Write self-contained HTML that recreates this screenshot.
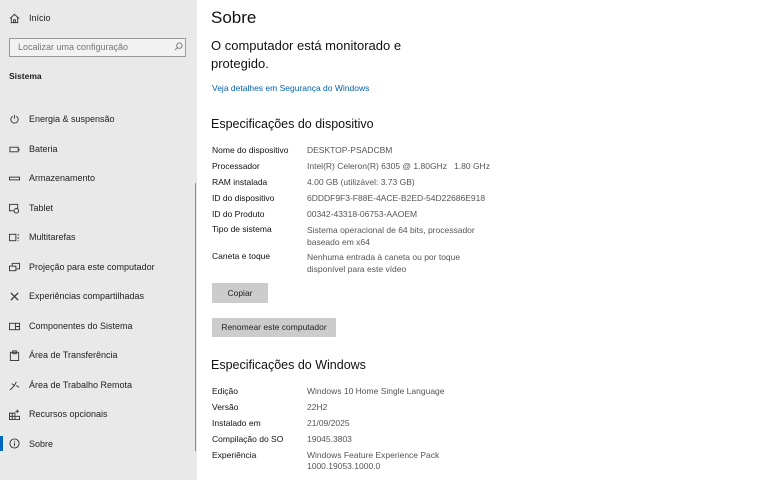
<!DOCTYPE html>
<html><head><meta charset="utf-8"><style>
*{margin:0;padding:0;box-sizing:border-box}
body{width:780px;height:480px;overflow:hidden;background:#fff;font-family:"Liberation Sans",sans-serif;position:relative;color:#000}
#side{position:absolute;left:0;top:0;width:197px;height:480px;background:#e9e9e9}
.t{position:absolute;white-space:nowrap}
.nav{font-size:9px;color:#222}
.ic{position:absolute;left:9px;width:11px;height:11px}
.lbl{font-size:8.5px;color:#111}
.val{font-size:8.5px;color:#555}
.btn{position:absolute;background:#ccc;font-size:8.5px;color:#222;text-align:center}
</style></head><body>
<div id="side">
<svg class="ic" style="top:13px" viewBox="0 0 12 12" fill="none" stroke="#333" stroke-width="1"><path d="M1 6L6 1.5 11 6M2.5 5v5.5h7V5M5 10.5V7.5h2v3"/></svg>
<div class="t nav" style="left:29px;top:13px">Início</div>
<div style="position:absolute;left:9px;top:38px;width:177px;height:19px;border:1px solid #9a9a9a;background:#f2f2f2"></div>
<div class="t nav" style="left:18px;top:42px;color:#777">Localizar uma configuração</div>
<svg style="position:absolute;left:174px;top:42px;width:9px;height:9px" viewBox="0 0 10 10" fill="none" stroke="#777"><circle cx="6" cy="4" r="3"/><path d="M4 6L1 9"/></svg>
<div class="t nav" style="left:9px;top:71px;font-weight:bold;font-size:8.5px">Sistema</div>
<svg class="ic" style="top:114px" viewBox="0 0 12 12" fill="none" stroke="#333"><path d="M4 2.5A4 4 0 1 0 8 2.5M6 1v4"/></svg>
<div class="t nav" style="left:29px;top:114px">Energia &amp; suspensão</div>
<svg class="ic" style="top:144px" viewBox="0 0 12 12" fill="none" stroke="#333"><rect x="1" y="3.5" width="9" height="5"/><path d="M11 5v2"/></svg>
<div class="t nav" style="left:29px;top:144px">Bateria</div>
<svg class="ic" style="top:173px" viewBox="0 0 12 12" fill="none" stroke="#333"><rect x="0.5" y="4.5" width="11" height="3"/></svg>
<div class="t nav" style="left:29px;top:173px">Armazenamento</div>
<svg class="ic" style="top:203px" viewBox="0 0 12 12" fill="none" stroke="#333"><rect x="0.5" y="1.5" width="9" height="7"/><circle cx="8" cy="8.5" r="2.5" fill="#e9e9e9"/></svg>
<div class="t nav" style="left:29px;top:203px">Tablet</div>
<svg class="ic" style="top:232px" viewBox="0 0 12 12" fill="none" stroke="#333"><rect x="0.5" y="2.5" width="7" height="7"/><path d="M10 2v2M10 5.5v2M10 9v1"/></svg>
<div class="t nav" style="left:29px;top:232px">Multitarefas</div>
<svg class="ic" style="top:262px" viewBox="0 0 12 12" fill="none" stroke="#333"><rect x="3.5" y="1.5" width="8" height="6"/><rect x="0.5" y="4.5" width="7" height="5" fill="#e9e9e9"/></svg>
<div class="t nav" style="left:29px;top:262px">Projeção para este computador</div>
<svg class="ic" style="top:291px" viewBox="0 0 12 12" fill="none" stroke="#333" stroke-width="1.3"><path d="M2 2l8 8M10 2l-8 8"/></svg>
<div class="t nav" style="left:29px;top:291px">Experiências compartilhadas</div>
<svg class="ic" style="top:321px" viewBox="0 0 12 12" fill="none" stroke="#333"><rect x="0.5" y="2.5" width="11" height="7"/><path d="M7 2.5v7M7 6h4.5"/></svg>
<div class="t nav" style="left:29px;top:321px">Componentes do Sistema</div>
<svg class="ic" style="top:350px" viewBox="0 0 12 12" fill="none" stroke="#333"><rect x="1.5" y="2.5" width="9" height="9"/><rect x="4" y="1" width="4" height="3"/></svg>
<div class="t nav" style="left:29px;top:350px">Área de Transferência</div>
<svg class="ic" style="top:380px" viewBox="0 0 12 12" fill="none" stroke="#333"><path d="M1 11L6 6M3 4l3 2 2-4M8 6l3 2"/></svg>
<div class="t nav" style="left:29px;top:380px">Área de Trabalho Remota</div>
<svg class="ic" style="top:409px" viewBox="0 0 12 12" fill="none" stroke="#333"><path d="M0.5 4.5h6v7h-6zM0.5 8h6M3.5 4.5v7M6.5 8h5v3.5h-5M9 0.5v4M7 2.5h4"/></svg>
<div class="t nav" style="left:29px;top:409px">Recursos opcionais</div>
<div style="position:absolute;left:0;top:436px;width:3px;height:15px;background:#0067c0"></div>
<svg class="ic" style="top:438px" viewBox="0 0 12 12" fill="none" stroke="#333"><circle cx="6" cy="6" r="5"/><path d="M6 5v4M6 3v1"/></svg>
<div class="t nav" style="left:29px;top:439px">Sobre</div>
<div style="position:absolute;left:195px;top:183px;width:1px;height:268px;background:#888"></div>
</div>
<div class="t" style="left:211px;top:8px;font-size:17px;color:#111">Sobre</div>
<div class="t" style="left:211px;top:37px;font-size:13px;line-height:18px;color:#111">O computador está monitorado e<br>protegido.</div>
<div class="t" style="left:212px;top:83px;font-size:8.5px;color:#0063b1">Veja detalhes em Segurança do Windows</div>
<div class="t" style="left:211px;top:117px;font-size:12.5px;color:#111">Especificações do dispositivo</div>
<div class="t lbl" style="left:212px;top:145px">Nome do dispositivo</div><div class="t val" style="left:307px;top:145px">DESKTOP-PSADCBM</div>
<div class="t lbl" style="left:212px;top:161px">Processador</div><div class="t val" style="left:307px;top:161px">Intel(R) Celeron(R) 6305 @ 1.80GHz &nbsp; 1.80 GHz</div>
<div class="t lbl" style="left:212px;top:177px">RAM instalada</div><div class="t val" style="left:307px;top:177px">4.00 GB (utilizável: 3.73 GB)</div>
<div class="t lbl" style="left:212px;top:193px">ID do dispositivo</div><div class="t val" style="left:307px;top:193px">6DDDF9F3-F88E-4ACE-B2ED-54D22686E918</div>
<div class="t lbl" style="left:212px;top:209px">ID do Produto</div><div class="t val" style="left:307px;top:209px">00342-43318-06753-AAOEM</div>
<div class="t lbl" style="left:212px;top:224px">Tipo de sistema</div><div class="t val" style="left:307px;top:224px;line-height:12px">Sistema operacional de 64 bits, processador<br>baseado em x64</div>
<div class="t lbl" style="left:212px;top:251px">Caneta e toque</div><div class="t val" style="left:307px;top:251px;line-height:12px">Nenhuma entrada à caneta ou por toque<br>disponível para este vídeo</div>
<div class="btn" style="left:212px;top:283px;width:56px;height:20px;line-height:20px">Copiar</div>
<div class="btn" style="left:212px;top:318px;width:124px;height:19px;line-height:19px">Renomear este computador</div>
<div class="t" style="left:211px;top:358px;font-size:12.5px;color:#111">Especificações do Windows</div>
<div class="t lbl" style="left:212px;top:386px">Edição</div><div class="t val" style="left:307px;top:386px">Windows 10 Home Single Language</div>
<div class="t lbl" style="left:212px;top:402px">Versão</div><div class="t val" style="left:307px;top:402px">22H2</div>
<div class="t lbl" style="left:212px;top:418px">Instalado em</div><div class="t val" style="left:307px;top:418px">21/09/2025</div>
<div class="t lbl" style="left:212px;top:434px">Compilação do SO</div><div class="t val" style="left:307px;top:434px">19045.3803</div>
<div class="t lbl" style="left:212px;top:450px">Experiência</div><div class="t val" style="left:307px;top:450px;line-height:11px">Windows Feature Experience Pack<br>1000.19053.1000.0</div>
</body></html>
